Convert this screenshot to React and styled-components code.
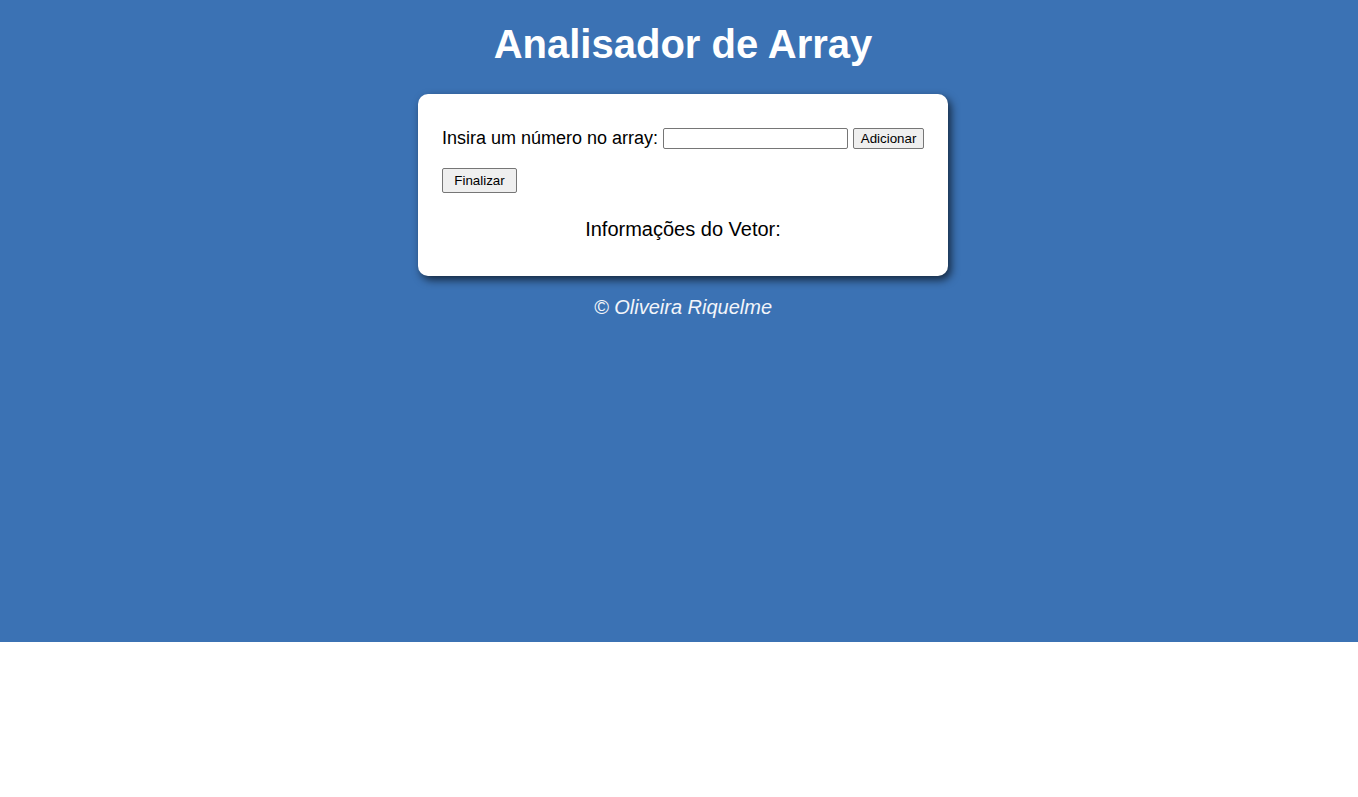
import React from "react";
import styled, { createGlobalStyle } from "styled-components";

const Global = createGlobalStyle`
  html, body { margin: 0; padding: 0; background: #ffffff; }
  body { font-family: "Liberation Sans", Arial, sans-serif; }
`;

const Page = styled.main`
  height: 642px;
  background: #3b72b4;
  display: flex;
  flex-direction: column;
  align-items: center;
  padding: 21px 0 0 8px;
  box-sizing: border-box;
`;

const Title = styled.h1`
  margin: 0;
  font-size: 40px;
  line-height: 46px;
  font-weight: bold;
  color: #ffffff;
`;

const Card = styled.section`
  margin-top: 27px;
  width: 530px;
  box-sizing: border-box;
  background: #ffffff;
  border-radius: 10px;
  box-shadow: 3px 4px 8px rgba(0, 0, 0, 0.65);
  padding: 34px 24px 35px;
  display: flex;
  flex-direction: column;
`;

const Row = styled.div`
  display: flex;
  align-items: center;
  height: ${(p) => p.$h || 21}px;
  margin-top: ${(p) => p.$mt || 0}px;
`;

const Label = styled.label`
  font-size: 18px;
  color: #000;
  margin-right: 5px;
  white-space: nowrap;
  flex-shrink: 0;
`;

const NumberInput = styled.input`
  width: 185px;
  height: 21px;
  flex-shrink: 0;
  box-sizing: border-box;
  border: 1px solid #767676;
  border-radius: 2px;
  padding: 1px 2px;
  margin: 0 5px 0 0;
  font-family: "Liberation Sans", Arial, sans-serif;
  font-size: 13.33px;
`;

const Button = styled.button`
  height: ${(p) => p.$h}px;
  width: ${(p) => p.$w}px;
  flex-shrink: 0;
  box-sizing: border-box;
  background: #efefef;
  border: 1px solid #767676;
  border-radius: 2px;
  padding: 0;
  margin: 0;
  font-family: "Liberation Sans", Arial, sans-serif;
  font-size: 13.33px;
  color: #000;
`;

const InfoTitle = styled.h3`
  margin: 25px 0 0;
  text-align: center;
  font-size: 20px;
  line-height: 23px;
  font-weight: normal;
  color: #000;
`;

const Footer = styled.footer`
  margin-top: 20px;
  font-size: 20px;
  line-height: 23px;
  font-style: italic;
  color: #f2f5fa;
`;

export default function App() {
  return (
    <>
      <Global />
      <Page>
        <Title>Analisador de Array</Title>
        <Card>
          <Row>
            <Label htmlFor="num">Insira um número no array:</Label>
            <NumberInput id="num" type="number" />
            <Button $w={71} $h={21}>Adicionar</Button>
          </Row>
          <Row $h={25} $mt={19}>
            <Button $w={75} $h={25}>Finalizar</Button>
          </Row>
          <InfoTitle>Informações do Vetor:</InfoTitle>
        </Card>
        <Footer>© Oliveira Riquelme</Footer>
      </Page>
    </>
  );
}
